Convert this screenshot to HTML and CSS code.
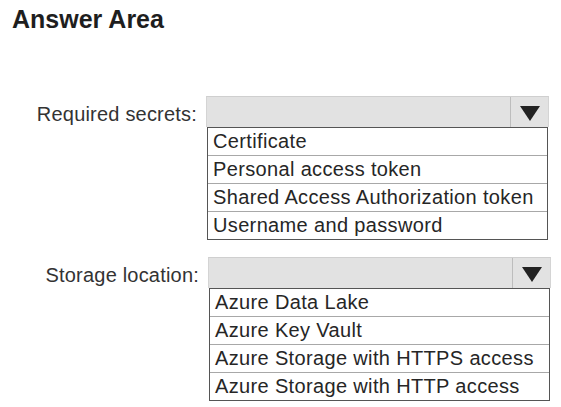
FILE: index.html
```html
<!DOCTYPE html>
<html lang="en">
<head>
  <meta charset="UTF-8" />
  <meta name="viewport" content="width=device-width, initial-scale=1" />
  <title>Answer Area</title>
  <link rel="stylesheet" href="styles.css">
</head>
<body>
  <h1>Answer Area</h1>

  <div class="row">
    <div class="label">Required secrets:</div>
    <div class="dropdown">
      <div class="select">
        <div class="value"></div>
        <div class="arrow">
          <svg width="20" height="15" viewBox="0 0 20 15"><polygon points="0,0 20,0 10,15" fill="#222" /></svg>
        </div>
      </div>
      <ul class="options">
        <li>Certificate</li>
        <li>Personal access token</li>
        <li>Shared Access Authorization token</li>
        <li>Username and password</li>
      </ul>
    </div>
  </div>

  <div class="row second">
    <div class="label">Storage location:</div>
    <div class="dropdown">
      <div class="select">
        <div class="value"></div>
        <div class="arrow">
          <svg width="20" height="15" viewBox="0 0 20 15"><polygon points="0,0 20,0 10,15" fill="#222" /></svg>
        </div>
      </div>
      <ul class="options">
        <li>Azure Data Lake</li>
        <li>Azure Key Vault</li>
        <li>Azure Storage with HTTPS access</li>
        <li>Azure Storage with HTTP access</li>
      </ul>
    </div>
  </div>
</body>
</html>
```

FILE: styles.css
```css
body {
  margin: 0;
  padding: 5px 0 0 12px;
  font-family: "Liberation Sans", Arial, sans-serif;
  color: #2a2a2a;
  background: #fff;
}

h1 {
  margin: 0 0 63px 0;
  font-size: 25px;
  line-height: 28px;
  font-weight: bold;
  color: #1e1e1e;
}

.row {
  display: grid;
  grid-template-columns: 185px 343px;
  column-gap: 9px;
  align-items: start;
}

.row.second {
  margin-top: 17px;
  margin-left: 2px;
}

.label {
  text-align: right;
  font-size: 20px;
  letter-spacing: 0.2px;
  line-height: 31px;
  padding-top: 3px;
  color: #333;
}

.select {
  display: flex;
  height: 30px;
  background: #e2e2e2;
  border-top: 1px solid #cfcfcf;
  border-left: 1px solid #d4d4d4;
  border-right: 1px solid #d4d4d4;
}

.value {
  flex: 1;
}

.arrow {
  width: 37px;
  border-left: 1px solid #bdbdbd;
  display: flex;
  justify-content: center;
  padding-top: 9px;
}

.options {
  list-style: none;
  margin: 0 1px 0 1px;
  padding: 0;
  border: 1px solid #555;
  background: #fff;
}

.options li {
  height: 27px;
  line-height: 27px;
  padding-left: 5px;
  font-size: 20px;
  letter-spacing: 0.35px;
  color: #262626;
  border-top: 1px solid #a8a8a8;
}

.options li:first-child {
  border-top: none;
}
```
